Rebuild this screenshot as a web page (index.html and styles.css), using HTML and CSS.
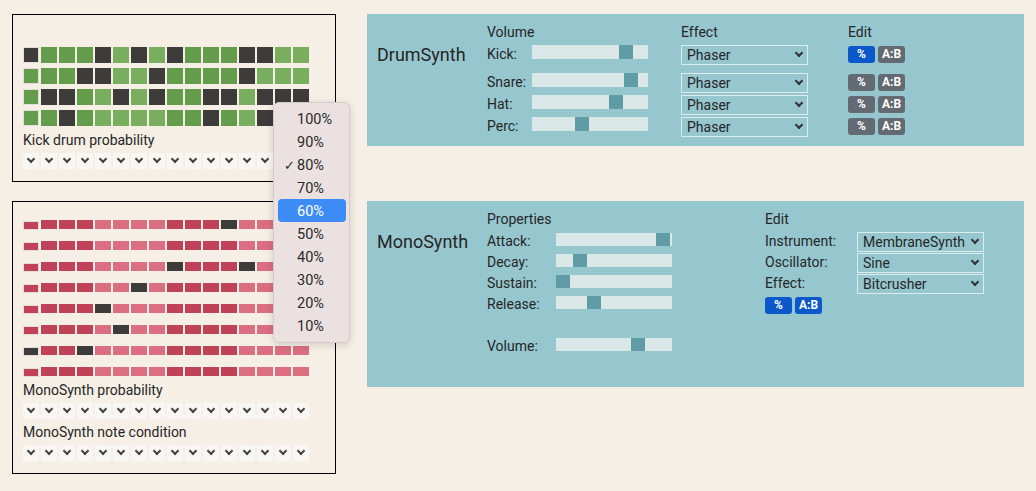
FILE: index.html
```html
<!DOCTYPE html>
<html>
<head>
  <title>Step Sequencer</title>
  <link rel="stylesheet" href="styles.css">
</head>
<body>
  <div class="page">
    <div class="track">
      <div class="steps-panel kick">
        <div class="step-row">
          <span class="step off"></span><span class="step"></span><span class="step"></span><span class="step"></span>
          <span class="step off"></span><span class="step"></span><span class="step off"></span><span class="step"></span>
          <span class="step off"></span><span class="step"></span><span class="step"></span><span class="step"></span>
          <span class="step off"></span><span class="step off"></span><span class="step"></span><span class="step"></span>
        </div>
        <div class="step-row">
          <span class="step"></span><span class="step"></span><span class="step"></span><span class="step off"></span>
          <span class="step off"></span><span class="step"></span><span class="step"></span><span class="step off"></span>
          <span class="step"></span><span class="step"></span><span class="step"></span><span class="step"></span>
          <span class="step off"></span><span class="step"></span><span class="step"></span><span class="step"></span>
        </div>
        <div class="step-row">
          <span class="step"></span><span class="step off"></span><span class="step off"></span><span class="step"></span>
          <span class="step"></span><span class="step off"></span><span class="step"></span><span class="step off"></span>
          <span class="step"></span><span class="step"></span><span class="step off"></span><span class="step off"></span>
          <span class="step"></span><span class="step off"></span><span class="step off"></span><span class="step off"></span>
        </div>
        <div class="step-row">
          <span class="step"></span><span class="step"></span><span class="step off"></span><span class="step"></span>
          <span class="step"></span><span class="step"></span><span class="step"></span><span class="step"></span>
          <span class="step"></span><span class="step"></span><span class="step off"></span><span class="step"></span>
          <span class="step"></span><span class="step off"></span><span class="step"></span><span class="step"></span>
        </div>
        <div class="caption">Kick drum probability</div>
        <div class="chevrons">
          <span class="chev"></span><span class="chev"></span><span class="chev"></span><span class="chev"></span>
          <span class="chev"></span><span class="chev"></span><span class="chev"></span><span class="chev"></span>
          <span class="chev"></span><span class="chev"></span><span class="chev"></span><span class="chev"></span>
          <span class="chev"></span><span class="chev"></span><span class="chev"></span><span class="chev"></span>
        </div>
      </div>

      <div class="synth-panel drum-synth">
        <div class="synth-name">DrumSynth</div>
        <div class="drum-grid">
          <div class="drow head">
            <div class="head-volume">Volume</div>
            <div class="head-effect">Effect</div>
            <div>Edit</div>
          </div>
          <div class="drow first">
            <div class="dlabel">Kick:</div>
            <div class="slider"><span class="thumb" style="margin-left: 87px"></span></div>
            <div class="select"><span>Phaser</span></div>
            <div class="btns"><span class="btn on">%</span><span class="btn">A:B</span></div>
          </div>
          <div class="drow">
            <div class="dlabel">Snare:</div>
            <div class="slider"><span class="thumb" style="margin-left: 92px"></span></div>
            <div class="select"><span>Phaser</span></div>
            <div class="btns"><span class="btn">%</span><span class="btn">A:B</span></div>
          </div>
          <div class="drow">
            <div class="dlabel">Hat:</div>
            <div class="slider"><span class="thumb" style="margin-left: 77px"></span></div>
            <div class="select"><span>Phaser</span></div>
            <div class="btns"><span class="btn">%</span><span class="btn">A:B</span></div>
          </div>
          <div class="drow">
            <div class="dlabel">Perc:</div>
            <div class="slider"><span class="thumb" style="margin-left: 43px"></span></div>
            <div class="select"><span>Phaser</span></div>
            <div class="btns"><span class="btn">%</span><span class="btn">A:B</span></div>
          </div>
        </div>
      </div>
    </div>

    <div class="track">
      <div class="steps-panel mono">
        <div class="step-row">
          <span class="step"></span><span class="step"></span><span class="step"></span><span class="step"></span>
          <span class="step"></span><span class="step"></span><span class="step"></span><span class="step"></span>
          <span class="step"></span><span class="step"></span><span class="step"></span><span class="step off"></span>
          <span class="step"></span><span class="step"></span><span class="step"></span><span class="step"></span>
        </div>
        <div class="step-row">
          <span class="step"></span><span class="step"></span><span class="step"></span><span class="step"></span>
          <span class="step"></span><span class="step"></span><span class="step"></span><span class="step"></span>
          <span class="step"></span><span class="step"></span><span class="step"></span><span class="step"></span>
          <span class="step"></span><span class="step"></span><span class="step"></span><span class="step"></span>
        </div>
        <div class="step-row">
          <span class="step"></span><span class="step"></span><span class="step"></span><span class="step"></span>
          <span class="step"></span><span class="step"></span><span class="step"></span><span class="step"></span>
          <span class="step off"></span><span class="step"></span><span class="step"></span><span class="step"></span>
          <span class="step off"></span><span class="step"></span><span class="step"></span><span class="step"></span>
        </div>
        <div class="step-row">
          <span class="step"></span><span class="step"></span><span class="step"></span><span class="step"></span>
          <span class="step"></span><span class="step"></span><span class="step off"></span><span class="step"></span>
          <span class="step"></span><span class="step"></span><span class="step"></span><span class="step"></span>
          <span class="step"></span><span class="step"></span><span class="step"></span><span class="step"></span>
        </div>
        <div class="step-row">
          <span class="step"></span><span class="step"></span><span class="step"></span><span class="step"></span>
          <span class="step off"></span><span class="step"></span><span class="step"></span><span class="step"></span>
          <span class="step"></span><span class="step"></span><span class="step"></span><span class="step"></span>
          <span class="step"></span><span class="step"></span><span class="step"></span><span class="step"></span>
        </div>
        <div class="step-row">
          <span class="step"></span><span class="step"></span><span class="step"></span><span class="step"></span>
          <span class="step"></span><span class="step off"></span><span class="step"></span><span class="step"></span>
          <span class="step"></span><span class="step"></span><span class="step"></span><span class="step"></span>
          <span class="step"></span><span class="step"></span><span class="step"></span><span class="step"></span>
        </div>
        <div class="step-row">
          <span class="step off"></span><span class="step"></span><span class="step"></span><span class="step off"></span>
          <span class="step"></span><span class="step"></span><span class="step"></span><span class="step"></span>
          <span class="step"></span><span class="step"></span><span class="step"></span><span class="step"></span>
          <span class="step"></span><span class="step"></span><span class="step"></span><span class="step"></span>
        </div>
        <div class="step-row">
          <span class="step"></span><span class="step"></span><span class="step"></span><span class="step"></span>
          <span class="step"></span><span class="step"></span><span class="step"></span><span class="step"></span>
          <span class="step"></span><span class="step"></span><span class="step"></span><span class="step"></span>
          <span class="step"></span><span class="step"></span><span class="step"></span><span class="step"></span>
        </div>
        <div class="caption">MonoSynth probability</div>
        <div class="chevrons">
          <span class="chev"></span><span class="chev"></span><span class="chev"></span><span class="chev"></span>
          <span class="chev"></span><span class="chev"></span><span class="chev"></span><span class="chev"></span>
          <span class="chev"></span><span class="chev"></span><span class="chev"></span><span class="chev"></span>
          <span class="chev"></span><span class="chev"></span><span class="chev"></span><span class="chev"></span>
        </div>
        <div class="caption second">MonoSynth note condition</div>
        <div class="chevrons">
          <span class="chev"></span><span class="chev"></span><span class="chev"></span><span class="chev"></span>
          <span class="chev"></span><span class="chev"></span><span class="chev"></span><span class="chev"></span>
          <span class="chev"></span><span class="chev"></span><span class="chev"></span><span class="chev"></span>
          <span class="chev"></span><span class="chev"></span><span class="chev"></span><span class="chev"></span>
        </div>
      </div>

      <div class="synth-panel mono-synth">
        <div class="synth-name">MonoSynth</div>
        <div class="props">
          <div class="block-head">Properties</div>
          <div class="mrow">
            <div class="mlabel">Attack:</div>
            <div class="slider"><span class="thumb" style="margin-left: 100px"></span></div>
          </div>
          <div class="mrow">
            <div class="mlabel">Decay:</div>
            <div class="slider"><span class="thumb" style="margin-left: 17px"></span></div>
          </div>
          <div class="mrow">
            <div class="mlabel">Sustain:</div>
            <div class="slider"><span class="thumb" style="margin-left: 0px"></span></div>
          </div>
          <div class="mrow">
            <div class="mlabel">Release:</div>
            <div class="slider"><span class="thumb" style="margin-left: 31px"></span></div>
          </div>
          <div class="mrow blank"></div>
          <div class="mrow">
            <div class="mlabel">Volume:</div>
            <div class="slider"><span class="thumb" style="margin-left: 75px"></span></div>
          </div>
        </div>
        <div class="edit">
          <div class="block-head">Edit</div>
          <div class="erow">
            <div class="elabel">Instrument:</div>
            <div class="select"><span>MembraneSynth</span></div>
          </div>
          <div class="erow">
            <div class="elabel">Oscillator:</div>
            <div class="select"><span>Sine</span></div>
          </div>
          <div class="erow">
            <div class="elabel">Effect:</div>
            <div class="select"><span>Bitcrusher</span></div>
          </div>
          <div class="btns"><span class="btn on">%</span><span class="btn on">A:B</span></div>
        </div>
      </div>
    </div>

    <!-- open probability picker -->
    <div class="menu">
      <div class="menu-item"><span class="tick"></span>100%</div>
      <div class="menu-item"><span class="tick"></span>90%</div>
      <div class="menu-item"><span class="tick">✓</span>80%</div>
      <div class="menu-item"><span class="tick"></span>70%</div>
      <div class="menu-item hover"><span class="tick"></span>60%</div>
      <div class="menu-item"><span class="tick"></span>50%</div>
      <div class="menu-item"><span class="tick"></span>40%</div>
      <div class="menu-item"><span class="tick"></span>30%</div>
      <div class="menu-item"><span class="tick"></span>20%</div>
      <div class="menu-item"><span class="tick"></span>10%</div>
    </div>
  </div>
</body>
</html>
```

FILE: styles.css
```css
:root {
  --page-bg: #f5efe6;
  --panel-bg: #96c7cf;
  --track: #d9e7e7;
  --thumb: #5f9ca5;
  --off: #3e3c3b;
  --kick-dark: #639c4a;
  --kick-light: #79ae5f;
  --mono-dark: #bf4259;
  --mono-light: #dc6e81;
  --blue: #0a58ca;
  --grey-btn: #646a72;
  --text: #262626;
}

body {
  margin: 0;
  background: var(--page-bg);
  font-family: Roboto, 'Liberation Sans', sans-serif;
  font-size: 14px;
  color: var(--text);
}

.page {
  position: relative;
  padding: 14px 12px;
  display: flex;
  flex-direction: column;
  gap: 19px;
}

.track {
  display: flex;
  align-items: flex-start;
  gap: 31px;
}

/* step grids */

.steps-panel {
  width: 324px;
  box-sizing: border-box;
  border: 1px solid #000;
  padding: 32px 10px 12px;
}

.steps-panel.mono {
  padding-top: 18px;
}

.step-row {
  display: flex;
  align-items: flex-start;
  gap: 2px;
}

.step-row + .step-row {
  margin-top: 5px;
}

.mono .step-row + .step-row {
  margin-top: 11px;
}

.step {
  width: 16px;
  height: 16px;
  background: var(--kick-dark);
}

.step:where(:nth-child(n+5):nth-child(-n+8), :nth-child(n+13)) {
  background: var(--kick-light);
}

.mono .step {
  height: 9px;
  background: var(--mono-dark);
}

.mono .step:where(:nth-child(n+5):nth-child(-n+8), :nth-child(n+13)) {
  background: var(--mono-light);
}

.step:first-child {
  box-sizing: border-box;
  border: 1px solid #e2ddd8;
}

.mono .step:first-child {
  margin-top: 1px;
}

.step-row .step.off {
  background: var(--off);
}

.caption {
  margin-top: 5px;
  line-height: 18px;
}

.mono .caption {
  margin-top: 4px;
}

.chevrons {
  display: flex;
  gap: 2px;
  margin-top: 4px;
}

.chev {
  width: 16px;
  height: 16px;
  background: #f9f7f3;
  display: flex;
  align-items: center;
  justify-content: center;
}

.chev::after,
.select::after {
  content: '';
  width: 4px;
  height: 4px;
  border-right: 2px solid #444;
  border-bottom: 2px solid #444;
  transform: translateY(-2px) rotate(45deg);
}

/* synth panels */

.synth-panel {
  width: 657px;
  box-sizing: border-box;
  background: var(--panel-bg);
  padding: 10px 10px 9px;
  display: flex;
}

.synth-name {
  width: 110px;
  flex-shrink: 0;
  font-size: 18px;
  line-height: 21px;
  padding-top: 20px;
}

.drow {
  display: flex;
  align-items: flex-start;
  height: 20px;
  margin-bottom: 2px;
}

.drow:last-child {
  margin-bottom: 0;
}

.drow.head {
  height: 16px;
  line-height: 16px;
  margin-bottom: 5px;
}

.drow.first {
  margin-bottom: 8px;
}

.head-volume {
  width: 194px;
}

.head-effect {
  width: 167px;
}

.dlabel {
  width: 45px;
  line-height: 18px;
}

.slider {
  width: 116px;
  height: 14px;
  background: var(--track);
  display: flex;
  margin-right: 33px;
}

.thumb {
  width: 14px;
  height: 100%;
  background: var(--thumb);
}

.select {
  width: 127px;
  height: 20px;
  box-sizing: border-box;
  border: 1px solid #dcecec;
  padding: 0 5px;
  line-height: 18px;
  display: flex;
  align-items: center;
  justify-content: space-between;
  margin-right: 40px;
}

.select span {
  white-space: nowrap;
  overflow: hidden;
}

.select::after {
  flex-shrink: 0;
  margin-left: 3px;
  border-color: #333;
  border-width: 0 2px 2px 0;
}

.btns {
  display: flex;
  gap: 3px;
  margin-top: 1px;
}

.btn {
  width: 27px;
  height: 17px;
  line-height: 17px;
  border-radius: 3px;
  background: var(--grey-btn);
  color: #fff;
  font-size: 12px;
  font-weight: bold;
  text-align: center;
}

.btn.on {
  background: var(--blue);
}

.mono-synth {
  padding-bottom: 29px;
}

.props {
  width: 185px;
  margin-right: 93px;
}

.block-head {
  line-height: 16px;
  margin-bottom: 5px;
}

.mrow,
.erow {
  display: flex;
  align-items: flex-start;
  height: 21px;
}

.mlabel {
  width: 69px;
  line-height: 18px;
}

.mrow .slider {
  height: 13px;
  margin: 1px 0 0;
}

.elabel {
  width: 92px;
  line-height: 18px;
}

.erow .select {
  margin-right: 0;
}

.edit .btns {
  margin-top: 2px;
}

/* native-looking popup menu */

.menu {
  position: absolute;
  left: 273px;
  top: 102px;
  width: 77px;
  box-sizing: border-box;
  padding: 4px 0 5px;
  background: #ebe1e0;
  border: 1px solid #d3cbca;
  border-radius: 6px;
  box-shadow: 0 2px 8px rgba(0, 0, 0, 0.15);
  color: #2a2a2a;
}

.menu-item {
  display: flex;
  margin: 0 3px 0 4px;
  height: 23px;
  line-height: 25px;
  padding-left: 6px;
  border-radius: 4px;
  font-size: 14.5px;
}

.menu-item.hover {
  background: #3d8cf6;
  color: #fff;
}

.tick {
  width: 13px;
  font-family: 'DejaVu Sans', sans-serif;
  font-size: 13px;
  font-weight: bold;
}
```
